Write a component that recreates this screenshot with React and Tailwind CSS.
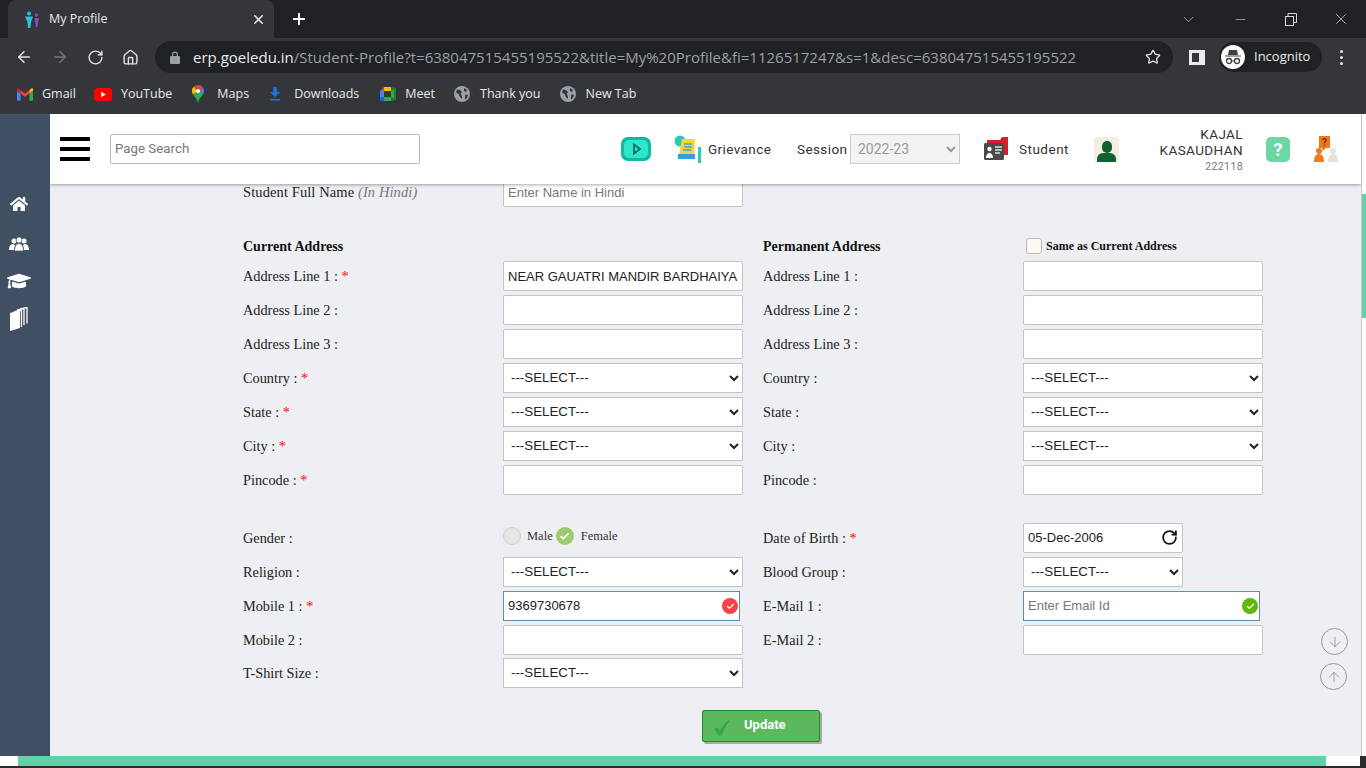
import React from 'react';
import { ArrowLeft, ArrowRight, RotateCw, Home, Star, X, Minus, Plus, ChevronDown, ArrowDown, ArrowUp, Check } from 'lucide-react';
import { FaHome, FaGraduationCap } from 'react-icons/fa';

const Globe = () => (
  <svg width="16" height="16" viewBox="0 0 16 16">
    <circle cx="8" cy="8" r="8" fill="#9aa0a6" />
    <path d="M3 3.5l3 .5 2 2-1.500 2 1.500 2v3L6 11 4.500 8 2 6.500zM10 2l3 2-1 2-2-1zM11 9l3-.5-1 3.500-2 1.500z" fill="#35363a" />
  </svg>
);

const BOOKMARKS = [
  {
    label: 'Gmail',
    box: 'w-[25px]',
    icon: (
      <svg width="16" height="13" viewBox="0 0 16 13">
        <path d="M0 2.500V11.500A1.200 1.200 0 0 0 1.200 12.700H3.600V5.500z" fill="#4285f4" />
        <path d="M16 2.500V11.500A1.200 1.200 0 0 1 14.800 12.700H12.400V5.500z" fill="#34a853" />
        <path d="M0 2.500L3.600 5.500 3.600 2 1.800.6A1.100 1.100 0 0 0 0 2.500z" fill="#c5221f" />
        <path d="M3.600 2L8 5.400 12.400 2V5.500L8 9 3.600 5.500z" fill="#ea4335" />
        <path d="M16 2.500L12.400 5.500V2L14.200.6A1.100 1.100 0 0 1 16 2.500z" fill="#fbbc04" />
      </svg>
    ),
  },
  {
    label: 'YouTube',
    box: 'w-[27px]',
    icon: (
      <svg width="18" height="13" viewBox="0 0 18 13">
        <rect width="18" height="13" rx="3.500" fill="#f00" />
        <path d="M7.200 3.800L11.800 6.500 7.200 9.200z" fill="#fff" />
      </svg>
    ),
  },
  {
    label: 'Maps',
    box: 'w-[27px] pl-[2px]',
    icon: (
      <svg width="12" height="18" viewBox="0 0 12 18">
        <path d="M6 0a6 6 0 0 1 6 6c0 1.200-.4 2.200-1 3.200L6 5.500z" fill="#4285f4" />
        <path d="M1.800 1.800A6 6 0 0 1 6 0l5 3-3 3z" fill="#ea4335" />
        <path d="M1 9.400A6 6 0 0 1 1.800 1.800L5 5 4 7.500z" fill="#fbbc04" />
        <path d="M1 9.400L8 5.600 11 9.200C9.500 11.500 7 13.500 6 18 5.400 14.500 3 12 1 9.400z" fill="#34a853" />
        <circle cx="6" cy="6" r="2.100" fill="#fff" />
      </svg>
    ),
  },
  {
    label: 'Downloads',
    box: 'w-[27px] pl-[3px]',
    icon: (
      <svg width="10" height="14" viewBox="0 0 10 14">
        <path d="M3.300 0H6.700V5H10L5 10 0 5H3.300zM0 12H10V13.500H0z" fill="#1a73e8" />
      </svg>
    ),
  },
  {
    label: 'Meet',
    box: 'w-[28px] pl-[3px]',
    icon: (
      <svg width="16" height="16" viewBox="0 0 16 16">
        <path d="M4 1H11V5H4z" fill="#fbbc04" />
        <path d="M4 1L0 5H4z" fill="#ea4335" />
        <path d="M0 5H4V11H0z" fill="#4285f4" />
        <path d="M0 11H4V15H1.200A1.200 1.200 0 0 1 0 13.800z" fill="#1967d2" />
        <path d="M4 11H11V15H4z" fill="#34a853" />
        <path d="M11 1V15L16 14V2z" fill="#188038" />
        <path d="M11 5.500L14 3.500V12.500L11 10.500z" fill="#34a853" />
      </svg>
    ),
  },
  { label: 'Thank you', box: 'w-[27px] pl-[1px]', icon: <Globe /> },
  { label: 'New Tab', box: 'w-[27px] pl-[2px]', icon: <Globe /> },
];

function BrowserChrome() {
  return (
    <div className="h-[114px] shrink-0 bg-[#35363a] text-white font-['Open_Sans',sans-serif]">
      <div className="h-[38px] bg-[#202124] flex items-center pl-[8px] pr-[16px]">
        <div className="w-[266px] h-[38px] bg-[#35363a] rounded-t-[8px] flex items-center pl-[16px] pr-[8px]">
          <svg width="16" height="17" viewBox="0 0 16 17" className="shrink-0">
            <circle cx="5" cy="2.500" r="2" fill="#27c4dc" />
            <path d="M1 5.500H9L7 11 6.500 17H4L3.500 11z" fill="#27c4dc" />
            <circle cx="12.500" cy="4" r="1.700" fill="#8e44c9" />
            <path d="M10.500 7H15L14 11.500 13.500 16H11.800L11.300 11.500z" fill="#8e44c9" />
          </svg>
          <span className="ml-[9px] text-[12.500px] text-[#e8eaed]">My Profile</span>
          <X size={15} strokeWidth={2.500} className="ml-auto text-[#e8eaed]" />
        </div>
        <Plus size={18} strokeWidth={2.500} className="ml-[16px]" />
        <div className="ml-auto flex items-center text-[#d5d6d8]">
          <ChevronDown size={17} strokeWidth={1} />
          <Minus size={15} strokeWidth={1} className="ml-[36px]" />
          <svg width="12" height="13" viewBox="0 0 12 13" className="ml-[37px]" fill="none" stroke="currentColor">
            <rect x="0.500" y="3.500" width="8" height="9" />
            <path d="M3 3.500V.5H11.500V9.500H8.500" />
          </svg>
          <X size={18} strokeWidth={1} className="ml-[35px]" />
        </div>
      </div>

      <div className="h-[38px] flex items-center">
        <ArrowLeft size={18} strokeWidth={2} className="ml-[15px] text-[#dee1e6]" />
        <ArrowRight size={18} strokeWidth={2} className="ml-[18px] text-[#75777b]" />
        <RotateCw size={17} strokeWidth={2} className="ml-[18px] text-[#dee1e6]" />
        <Home size={17} strokeWidth={2} className="ml-[18px] text-[#dee1e6]" />
        <div className="ml-[16px] w-[1018px] h-[32px] rounded-full bg-[#202124] flex items-center pl-[15px] pr-[12px]">
          <svg width="10" height="13" viewBox="0 0 10 13">
            <path d="M2 5V3.500a3 3 0 0 1 6 0V5H9a1 1 0 0 1 1 1v6a1 1 0 0 1-1 1H1a1 1 0 0 1-1-1V6a1 1 0 0 1 1-1zM3.200 5H6.800V3.500a1.800 1.800 0 0 0-3.600 0z" fill="#9aa0a6" />
          </svg>
          <span className="ml-[13px] text-[15px] whitespace-nowrap text-[#e8eaed]">
            erp.goeledu.in<span className="text-[#9aa0a6]">/Student-Profile?t=638047515455195522&amp;title=My%20Profile&amp;fi=1126517247&amp;s=1&amp;desc=638047515455195522</span>
          </span>
          <Star size={16} strokeWidth={2} className="ml-auto text-[#dee1e6]" />
        </div>
        <div className="ml-[16px] w-[16px] h-[15px] border-[3px] border-r-[6px] border-[#eceded] bg-[#35363a]" />
        <div className="ml-[14px] w-[103px] h-[30px] rounded-full bg-[#202124] flex items-center pl-[2px]">
          <div className="w-[24px] h-[24px] rounded-full bg-white flex items-center justify-center">
            <svg width="18" height="16" viewBox="0 0 18 16" fill="#3c4043">
              <path d="M5 1H13L14 6H4zM1 6.500H17V7.500H1z" />
              <circle cx="5" cy="12" r="2.500" fill="none" stroke="#3c4043" strokeWidth="1.300" />
              <circle cx="13" cy="12" r="2.500" fill="none" stroke="#3c4043" strokeWidth="1.300" />
              <path d="M7.500 11.500H10.500V12.500H7.500z" />
            </svg>
          </div>
          <span className="ml-[9px] text-[13px] text-[#e8eaed]">Incognito</span>
        </div>
        <div className="ml-[18px] flex flex-col gap-[3px]">
          <span className="w-[3px] h-[3px] rounded-full bg-[#dee1e6]" />
          <span className="w-[3px] h-[3px] rounded-full bg-[#dee1e6]" />
          <span className="w-[3px] h-[3px] rounded-full bg-[#dee1e6]" />
        </div>
      </div>

      <div className="h-[36px] flex items-center pl-[17px] gap-[18px] text-[12.500px] text-[#e8eaed]">
        {BOOKMARKS.map((b) => (
          <div key={b.label} className="flex items-center">
            <div className={`${b.box} flex items-center`}>{b.icon}</div>
            <span>{b.label}</span>
          </div>
        ))}
      </div>
    </div>
  );
}

function TopBar() {
  return (
    <div className="relative z-10 h-[70px] shrink-0 bg-white shadow-[0_1px_3px_rgba(0,0,0,0.35)] flex items-center pl-[10px] font-['Roboto',sans-serif] text-[13.500px] text-[#333]">
      <div className="w-[30px] flex flex-col gap-[6px]">
        <span className="h-[4px] bg-black" />
        <span className="h-[4px] bg-black" />
        <span className="h-[4px] bg-black" />
      </div>
      <input
        placeholder="Page Search"
        className="ml-[20px] w-[310px] h-[30px] px-[4px] pb-[2px] border border-[#bbb] rounded-[2px] text-[13.300px] placeholder:text-[#777] outline-none"
      />

      {/* play */}
      <svg width="30" height="24" viewBox="0 0 30 24" className="ml-[201px] shrink-0">
        <rect x="0" y="0" width="30" height="24" rx="7" fill="#10b9a0" />
        <rect x="3" y="3" width="24" height="18" rx="5" fill="#2fe6c8" />
        <path d="M13 7.500L19 12 13 16.500z" fill="none" stroke="#0b6f66" strokeWidth="1.800" />
      </svg>

      {/* grievance */}
      <svg width="30" height="28" viewBox="0 0 30 28" className="ml-[23px] shrink-0">
        <circle cx="6" cy="6" r="5.500" fill="#2fc6c0" />
        <path d="M8 4H21L20 20H5z" fill="#f7d23f" />
        <path d="M10 9H18M10 12H18M9 15H17" stroke="#3fa7d6" strokeWidth="1.300" />
        <path d="M4 19H21V24H4z" fill="#2f9fe0" />
        <path d="M24 12H27V28H24z" fill="#2fc6c0" />
      </svg>
      <span className="ml-[4px] w-[64px] tracking-[0.4px]">Grievance</span>

      <span className="ml-[25px] w-[49px] tracking-[0.4px]">Session</span>
      <select
        disabled
        defaultValue="2022-23"
        className="ml-[4px] w-[110px] h-[30px] px-[3px] border border-[#ccc] bg-[#f3f3f3] text-[#999] text-[14px]"
      >
        <option>2022-23</option>
      </select>

      {/* student */}
      <svg width="25" height="24" viewBox="0 0 25 24" className="ml-[24px] shrink-0">
        <path d="M3 3H16L18 0H24V18H3z" fill="#d2222d" />
        <rect x="0" y="6" width="20" height="17" rx="1.500" fill="#4a4a4a" />
        <circle cx="5.500" cy="12" r="2.200" fill="#fff" />
        <path d="M2 21c0-3 1.500-5 3.500-5S9 18 9 21z" fill="#fff" />
        <path d="M11 10H18M11 13H18M11 16H16" stroke="#ddd" strokeWidth="1.300" />
      </svg>
      <span className="ml-[10px] w-[51px] tracking-[0.5px]">Student</span>

      {/* avatar */}
      <div className="ml-[24px] w-[25px] h-[25px] bg-[#f3ede2] rounded-[3px] flex flex-col items-center justify-end overflow-hidden shrink-0">
        <span className="w-[10px] h-[12px] rounded-full bg-[#11602f]" />
        <span className="w-[19px] h-[9px] rounded-t-[6px] bg-[#11602f]" />
      </div>

      <div className="w-[124px] text-right leading-[16px] shrink-0 pt-[2px]">
        <div className="tracking-[0.4px]">KAJAL</div>
        <div className="tracking-[0.4px]">KASAUDHAN</div>
        <div className="text-[10.500px] text-[#777] tracking-[0.4px] mt-[1px]">222118</div>
      </div>

      <div className="ml-[23px] w-[24px] h-[25px] rounded-[5px] bg-[#6dd6a5] text-white font-bold text-[18px] flex items-center justify-center shrink-0">?</div>

      <svg width="26" height="26" viewBox="0 0 26 26" className="ml-[23px] shrink-0">
        <rect x="6" y="0" width="11" height="12" fill="#ef7a1a" />
        <text x="11.500" y="9.500" textAnchor="middle" fontSize="10" fontWeight="700" fill="#7a3300">?</text>
        <path d="M9 12H13L10 15z" fill="#ef7a1a" />
        <circle cx="6" cy="15" r="3" fill="#ef7a1a" />
        <path d="M1 26c0-5 1.500-8 5-8s5 3 5 8z" fill="#ef7a1a" />
        <circle cx="20" cy="15" r="3" fill="#e6e2d8" />
        <path d="M15 26c0-5 1.500-8 5-8s5 3 5 8z" fill="#e6e2d8" />
      </svg>
    </div>
  );
}

function Label({ text, req }) {
  return (
    <div className="w-[260px] shrink-0 pt-[2px] text-[14.300px] text-[#222]">
      {text}
      {req && <span className="text-[#f00]"> *</span>}
    </div>
  );
}

const fieldCls =
  "w-[240px] h-[30px] shrink-0 bg-white border border-[#c4c4c4] rounded-[2px] px-[4px] font-['Liberation_Sans',sans-serif] text-[13px] text-[#222] placeholder:text-[#777] outline-none";
const selectCls =
  "w-[240px] h-[30px] shrink-0 bg-white border border-[#c4c4c4] px-[3px] pb-[2px] font-['Liberation_Sans',sans-serif] text-[13.300px] text-[#222]";

const Text = ({ value, placeholder }) => (
  <input className={fieldCls} defaultValue={value} placeholder={placeholder} />
);
const Select = () => (
  <select className={selectCls}>
    <option>---SELECT---</option>
  </select>
);

const ADDRESS_ROWS = [
  { left: 'Address Line 1 :', right: 'Address Line 1 :', req: true, value: 'NEAR GAUATRI MANDIR BARDHAIYA' },
  { left: 'Address Line 2 :', right: 'Address Line 2 :' },
  { left: 'Address Line 3 :', right: 'Address Line 3 :' },
  { left: 'Country :', right: 'Country :', req: true, select: true },
  { left: 'State :', right: 'State :', req: true, select: true },
  { left: 'City :', right: 'City :', req: true, select: true },
  { left: 'Pincode :', right: 'Pincode :', req: true },
];

function ValidatedInput({ value, placeholder, color }) {
  return (
    <div className="relative w-[237px] h-[30px] shrink-0">
      <input
        defaultValue={value}
        placeholder={placeholder}
        className="w-full h-full bg-white border border-[#5f8fb0] px-[4px] pb-[2px] font-['Liberation_Sans',sans-serif] text-[13px] text-[#222] placeholder:text-[#777] outline-none"
      />
      <span className={`absolute right-[2px] top-[7px] w-[16px] h-[16px] rounded-full ${color} flex items-center justify-center`}>
        <Check size={9} strokeWidth={3.500} className="text-white" />
      </span>
    </div>
  );
}

function ProfileForm() {
  return (
    <div className="-mt-[7px] ml-[193px] w-[1020px] font-['Liberation_Serif',serif]">
      <div className="flex items-center h-[30px] mb-[20px]">
        <div className="w-[260px] pt-[2px] text-[14.500px] tracking-[0.1px] text-[#222]">
          Student Full Name <i className="text-[#777]">(In Hindi)</i>
        </div>
        <Text placeholder="Enter Name in Hindi" />
      </div>

      <div className="flex items-end h-[30px] mb-[4px] font-bold text-[14px] text-[#111]">
        <div className="w-[260px]">Current Address</div>
        <div className="w-[240px]" />
        <div className="ml-[20px] w-[260px]">Permanent Address</div>
        <div className="flex items-center pl-[3px] pb-[2px]">
          <span className="w-[16px] h-[16px] rounded-[3px] border border-[#bbb] bg-[#fdf8f3]" />
          <span className="ml-[4px] text-[12px]">Same as Current Address</span>
        </div>
      </div>

      {ADDRESS_ROWS.map((r, i) => (
        <div key={i} className="flex items-center h-[30px] mb-[4px]">
          <Label text={r.left} req={r.req} />
          {r.select ? <Select /> : <Text value={r.value} />}
          <div className="w-[20px] shrink-0" />
          <Label text={r.right} />
          {r.select ? <Select /> : <Text />}
        </div>
      ))}

      <div className="flex items-center h-[30px] mt-[28px] mb-[4px]">
        <Label text="Gender :" />
        <div className="w-[240px] shrink-0 flex items-center -mt-[4px] text-[12.500px] text-[#333]">
          <span className="w-[18px] h-[18px] rounded-full border border-[#ccc] bg-[#e6e6e6]" />
          <span className="ml-[6px]">Male</span>
          <span className="ml-[3px] w-[18px] h-[18px] rounded-full bg-[#9ccc6f] flex items-center justify-center">
            <Check size={11} strokeWidth={3.500} className="text-white" />
          </span>
          <span className="ml-[7px]">Female</span>
        </div>
        <div className="w-[20px] shrink-0" />
        <Label text="Date of Birth :" req />
        <div className="relative w-[160px] h-[30px] shrink-0">
          <input
            defaultValue="05-Dec-2006"
            className="w-full h-full bg-white border border-[#c4c4c4] rounded-[2px] px-[4px] pb-[2px] font-['Liberation_Sans',sans-serif] text-[13px] text-[#222] outline-none"
          />
          <RotateCw size={17} strokeWidth={2.500} className="absolute right-[5px] top-[6px] text-[#111]" />
        </div>
      </div>

      <div className="flex items-center h-[30px] mb-[4px]">
        <Label text="Religion :" />
        <Select />
        <div className="w-[20px] shrink-0" />
        <Label text="Blood Group :" />
        <select className="w-[160px] h-[30px] shrink-0 bg-white border border-[#c4c4c4] px-[3px] pb-[2px] font-['Liberation_Sans',sans-serif] text-[13.300px] text-[#222]">
          <option>---SELECT---</option>
        </select>
      </div>

      <div className="flex items-center h-[30px] mb-[4px]">
        <Label text="Mobile 1 :" req />
        <div className="w-[240px] shrink-0">
          <ValidatedInput value="9369730678" color="bg-[#f54248]" />
        </div>
        <div className="w-[20px] shrink-0" />
        <Label text="E-Mail 1 :" />
        <ValidatedInput placeholder="Enter Email Id" color="bg-[#62b70b]" />
      </div>

      <div className="flex items-center h-[29px] mb-[4px]">
        <Label text="Mobile 2 :" />
        <Text />
        <div className="w-[20px] shrink-0" />
        <Label text="E-Mail 2 :" />
        <Text />
      </div>

      <div className="flex items-center h-[30px]">
        <Label text="T-Shirt Size :" />
        <Select />
      </div>

      <div className="mt-[22px] ml-[459px] w-[118px] h-[32px] bg-[#5cb85c] border border-[#1f8a2f] rounded-[2px] shadow-[2px_2px_0_#a9a9a9] flex items-center pl-[11px]">
        <svg width="16" height="16" viewBox="0 0 18 18" className="mt-[3px]">
          <path d="M1 10L4 9 7 13C9 8 12 4 17 1 13 6 10 11 8 17H6z" fill="#2fb544" stroke="#1c8c30" strokeWidth="0.600" />
        </svg>
        <span className="ml-[14px] pb-[2px] font-['Roboto',sans-serif] font-bold text-[13px] text-white">Update</span>
      </div>
    </div>
  );
}

export default function App() {
  return (
    <div className="h-screen flex flex-col overflow-hidden bg-[#eeeff3]">
      <BrowserChrome />

      <div className="flex-1 min-h-0 flex">
        {/* sidebar */}
        <div className="w-[50px] shrink-0 bg-[#414f63] text-white pr-[12px] flex flex-col items-center pt-[81px]">
          <FaHome size={18} />
          <svg width="20" height="14" viewBox="0 0 20 14" fill="#fff" className="mt-[24px]">
            <circle cx="5" cy="4" r="2.500" />
            <circle cx="15" cy="4" r="2.500" />
            <path d="M0 13c0-4 2-6 4-6l2 1-1 5zM20 13c0-4-2-6-4-6l-2 1 1 5z" />
            <circle cx="10" cy="3" r="3" stroke="#414f63" strokeWidth="0.700" />
            <path d="M5.500 14c0-5 2-7.500 4.500-7.500S14.500 9 14.500 14z" stroke="#414f63" strokeWidth="0.700" />
          </svg>
          <FaGraduationCap size={24} className="mt-[18px]" />
          <svg width="20" height="24" viewBox="0 0 20 24" className="mt-[14px]" fill="none" stroke="#fff">
            <path d="M1 6L11 3V21L1 24z" fill="#fff" stroke="none" />
            <path d="M12.500 20V3L5 5M15 18V1.500L8 3M18 16.500V.5L11 2" strokeWidth="1.300" />
          </svg>
        </div>

        {/* page */}
        <div className="relative flex-1 min-w-0 flex flex-col overflow-hidden">
          <TopBar />
          <div className="flex-1 min-h-0 overflow-hidden">
            <ProfileForm />
          </div>

          <div className="absolute right-[13px] top-[514px] w-[27px] h-[27px] rounded-full border border-[#999] flex items-center justify-center text-[#777]">
            <ArrowDown size={16} strokeWidth={1} />
          </div>
          <div className="absolute right-[14px] top-[549px] w-[27px] h-[27px] rounded-full border border-[#999] flex items-center justify-center text-[#777]">
            <ArrowUp size={16} strokeWidth={1} />
          </div>
        </div>

        {/* vertical scrollbar */}
        <div className="w-[5px] shrink-0 bg-white border-l border-[#c4c4c4] pt-[80px]">
          <div className="h-[124px] bg-[#66cfa7]" />
        </div>
      </div>

      {/* horizontal scrollbar */}
      <div className="h-[10px] shrink-0 flex bg-white">
        <div className="w-[18px]" />
        <div className="w-[1308px] bg-[#66cfa7]" />
        <div className="flex-1" />
        <div className="w-[6px] bg-[#2b2b2b]" />
      </div>
      <div className="h-[2px] shrink-0 bg-[#2b2c30]" />
    </div>
  );
}
